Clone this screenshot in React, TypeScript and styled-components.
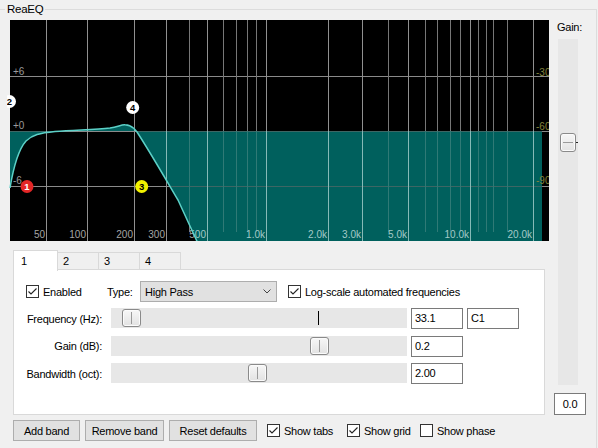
import React from "react";
import styled, { createGlobalStyle } from "styled-components";

const FONT = `"Liberation Sans", Arial, sans-serif`;

const GlobalStyle = createGlobalStyle`
  html, body { margin: 0; padding: 0; background: #f0f0f0; }
  body { font-family: ${FONT}; font-size: 11px; letter-spacing: -0.25px; color: #000; }
  *, *::before, *::after { box-sizing: border-box; }
`;

const Window = styled.div`
  width: 598px;
  height: 448px;
  background: #f0f0f0;
  overflow: hidden;
`;

const Group = styled.fieldset`
  margin: 0;
  width: 597px;
  height: 448px;
  min-width: 0;
  border: 1px solid #dcdcdc;
  border-left: 0;
  border-bottom: 0;
  padding: 1px 0 0 10px;
  display: flex;
`;

const Legend = styled.legend`
  margin-left: -5px;
  padding: 0 2px;
  height: 19px;
  line-height: 19px;
  font-size: 11.5px;
`;

const Main = styled.div`
  width: 539px;
  display: flex;
  flex-direction: column;
`;

const GraphSvg = styled.svg`
  display: block;
  margin-left: -3px;
  overflow: hidden;
  letter-spacing: 0;
`;

const TabArea = styled.div`
  margin: 9px 0 0 3px;
  width: 532px;
  display: flex;
  flex-direction: column;
`;

const TabStrip = styled.div`
  display: flex;
  align-items: flex-end;
  height: 21px;
  margin-bottom: -2px;
`;

const Tab = styled.div<{ $active?: boolean; $w: number; $first?: boolean }>`
  position: relative;
  z-index: ${(p) => (p.$active ? 2 : 0)};
  width: ${(p) => p.$w}px;
  height: ${(p) => (p.$active ? 21 : 19)}px;
  margin-left: ${(p) => (p.$first ? 0 : -1)}px;
  background: ${(p) => (p.$active ? "#ffffff" : "#f0f0f0")};
  border: 1px solid #d9d9d9;
  border-bottom: 0;
  padding: ${(p) => (p.$active ? "3px 0 0 7px" : "1px 0 0 5px")};
  line-height: 15px;
`;

const Panel = styled.div`
  position: relative;
  z-index: 1;
  height: 146px;
  background: #ffffff;
  border: 1px solid #d9d9d9;
  padding: 11px 0 0 12px;
`;

const TopRow = styled.div`
  display: flex;
  align-items: center;
  height: 21px;
`;

const CheckLabel = styled.label<{ $w?: number }>`
  display: flex;
  align-items: center;
  gap: 4px;
  flex: none;
  width: ${(p) => (p.$w ? `${p.$w}px` : "auto")};
  white-space: nowrap;
`;

const Box = styled.span`
  width: 13px;
  height: 13px;
  flex: none;
  border: 1px solid #333333;
  background: #ffffff;
  display: flex;
  align-items: center;
  justify-content: center;
`;

const TypeLabel = styled.span`
  width: 33px;
  flex: none;
`;

const Select = styled.div`
  width: 137px;
  height: 21px;
  flex: none;
  background: #e1e1e1;
  border: 1px solid #adadad;
  display: flex;
  align-items: center;
  justify-content: space-between;
  padding: 0 5px 0 4px;
  margin-right: 11px;
`;

const ParamGrid = styled.div`
  margin-top: 6px;
  display: grid;
  grid-template-columns: 81px 296px 52px 52px;
  grid-auto-rows: 21px;
  column-gap: 4px;
  row-gap: 6.5px;
  align-items: center;
`;

const ParamLabel = styled.div`
  text-align: right;
  padding-right: 5px;
  white-space: nowrap;
`;

const Track = styled.div`
  position: relative;
  height: 20px;
  align-self: start;
  background: #e7e7e7;
`;

const Thumb = styled.div<{ $vertical?: boolean }>`
  position: absolute;
  width: ${(p) => (p.$vertical ? 16 : 19)}px;
  height: ${(p) => (p.$vertical ? 19 : 18)}px;
  border: 1px solid #8a8a8a;
  border-radius: 3px;
  background: linear-gradient(#f7f7f7, #e2e2e2);
  box-shadow: inset 0 0 0 1px #fbfbfb;
  &::after {
    content: "";
    position: absolute;
    background: #9a9a9a;
    ${(p) =>
      p.$vertical
        ? "left: 2px; right: 2px; top: 8px; height: 1px;"
        : "top: 2px; bottom: 2px; left: 8px; width: 1px;"}
  }
`;

const Marker = styled.div`
  position: absolute;
  top: 3px;
  width: 1px;
  height: 14px;
  background: #000;
`;

const Edit = styled.div<{ $center?: boolean }>`
  height: 21px;
  background: #ffffff;
  border: 1px solid #7a7a7a;
  padding-left: ${(p) => (p.$center ? 0 : 3)}px;
  text-align: ${(p) => (p.$center ? "center" : "left")};
  line-height: 19px;
  white-space: nowrap;
`;

const ButtonRow = styled.div`
  display: flex;
  align-items: center;
  gap: 5px;
  margin: 5px 0 0 3px;
  height: 21px;
`;

const Button = styled.div<{ $w: number }>`
  width: ${(p) => p.$w}px;
  height: 21px;
  flex: none;
  background: #e1e1e1;
  border: 1px solid #adadad;
  display: flex;
  align-items: center;
  justify-content: center;
  white-space: nowrap;
`;

const Options = styled.div`
  display: flex;
  align-items: center;
  margin-left: 5px;
`;

const Side = styled.div`
  flex: 1;
  display: flex;
  flex-direction: column;
`;

const GainLabel = styled.div`
  margin-left: 8px;
  line-height: 15px;
`;

const GainTrack = styled.div`
  position: relative;
  margin: 4px 0 0 9px;
  width: 20px;
  height: 346px;
  background: #e7e7e7;
`;

const Tick = styled.div`
  position: absolute;
  left: 18px;
  top: 103px;
  width: 2px;
  height: 1px;
  background: #222;
`;

const GainEdit = styled(Edit)`
  margin: 8px 0 0 5px;
  width: 32px;
  height: 22px;
  line-height: 20px;
`;

/* ---------- graph drawing ---------- */

const MAJOR = [
  { x: 46, label: "50" },
  { x: 87, label: "100" },
  { x: 134, label: "200" },
  { x: 166, label: "300" },
  { x: 207, label: "500" },
  { x: 266, label: "1.0k" },
  { x: 328, label: "2.0k" },
  { x: 362, label: "3.0k" },
  { x: 408, label: "5.0k" },
  { x: 470, label: "10.0k" },
  { x: 533, label: "20.0k" },
];
const MINOR = [189, 223, 236, 247, 256, 388, 425, 437, 450, 460, 478, 486, 493, 507];
const HLINES = [76, 131, 186];

const CURVE =
  "M10,188 C13,170 18,150 26,141 C32,135 40,133 55,131.5 C75,130 95,129.5 110,128 C118,127 121,124.5 125,124.8 C129,125 131,126 134,128.5 L137,132 C150,152 165,178 178,200 L201,250";
const FILL = CURVE + " L542,250 L542,131 L10,131 Z";

const BANDS = [
  { n: "1", x: 27, y: 186.5, bg: "#e32626", fg: "#ffffff" },
  { n: "2", x: 9.5, y: 101.5, bg: "#ffffff", fg: "#000000" },
  { n: "3", x: 141.7, y: 186.5, bg: "#f2f200", fg: "#000000" },
  { n: "4", x: 132.7, y: 107.5, bg: "#ffffff", fg: "#000000" },
];

function Grid({ teal }: { teal?: boolean }) {
  const h = teal ? "#3d6664" : "#8a8a8a";
  const maj = teal ? "#86bab7" : "#909090";
  const min = teal ? "#2f7a76" : "#777777";
  const txt = teal ? "#a3cac8" : "#a5a5a5";
  return (
    <g>
      {HLINES.map((y) => (
        <line key={y} x1={10} x2={549} y1={y + 0.5} y2={y + 0.5} stroke={h} strokeWidth={1} />
      ))}
      {MINOR.map((x) => (
        <line key={x} x1={x + 0.5} x2={x + 0.5} y1={20} y2={232} stroke={min} strokeWidth={1} />
      ))}
      {MAJOR.map((m) => (
        <line key={m.x} x1={m.x + 0.5} x2={m.x + 0.5} y1={20} y2={241} stroke={maj} strokeWidth={1} />
      ))}
      {MAJOR.map((m) => (
        <text
          key={m.label}
          x={m.x - 1}
          y={238}
          textAnchor="end"
          fontFamily='"Liberation Sans", Arial, sans-serif'
          fontSize={10}
          fill={txt}
        >
          {m.label}
        </text>
      ))}
    </g>
  );
}

function Graph() {
  return (
    <GraphSvg width={542} height={221} viewBox="7 20 542 221">
      <defs>
        <clipPath id="fillclip">
          <path d={FILL} />
        </clipPath>
      </defs>
      <rect x={10} y={20} width={539} height={221} fill="#000" />
      <Grid />
      <path d={FILL} fill="#00605d" />
      <g clipPath="url(#fillclip)">
        <Grid teal />
      </g>
      <g fontFamily='"Liberation Sans", Arial, sans-serif' fontSize={10}>
        <text x={13} y={75} fill="#9a9a9a">+6</text>
        <text x={13} y={129} fill="#9a9a9a">+0</text>
        <text x={13} y={184} fill="#9a9a9a">-6</text>
        <text x={536} y={76} fill="#85853c">-30</text>
        <text x={536} y={130} fill="#85853c">-60</text>
        <text x={536} y={184} fill="#85853c">-90</text>
      </g>
      <path d={CURVE} fill="none" stroke="#5cd0c7" strokeWidth={1.5} />
      {BANDS.map((b) => (
        <g key={b.n}>
          <circle cx={b.x} cy={b.y} r={6.5} fill={b.bg} />
          <text
            x={b.x}
            y={b.y + 3.3}
            textAnchor="middle"
            fontFamily='"Liberation Sans", Arial, sans-serif'
            fontSize={9.5}
            fontWeight="bold"
            fill={b.fg}
          >
            {b.n}
          </text>
        </g>
      ))}
    </GraphSvg>
  );
}

function Check({ on }: { on?: boolean }) {
  return (
    <Box>
      {on && (
        <svg width="11" height="11" viewBox="0 0 11 11">
          <polyline points="1.5,5.5 4,8 9.5,2.5" fill="none" stroke="#222" strokeWidth="1.1" />
        </svg>
      )}
    </Box>
  );
}

function Chevron() {
  return (
    <svg width="8" height="5" viewBox="0 0 8 5">
      <polyline points="0.5,0.5 4,4 7.5,0.5" fill="none" stroke="#444" strokeWidth="1" />
    </svg>
  );
}

const PARAMS = [
  { label: "Frequency (Hz):", thumb: 11, value: "33.1", extra: "C1", marker: 207 },
  { label: "Gain (dB):", thumb: 199, value: "0.2" },
  { label: "Bandwidth (oct):", thumb: 137, value: "2.00" },
];

export default function App() {
  return (
    <Window>
      <GlobalStyle />
      <Group>
        <Legend>ReaEQ</Legend>
        <Main>
          <Graph />
          <TabArea>
            <TabStrip>
              <Tab $active $first $w={45}>1</Tab>
              <Tab $w={42}>2</Tab>
              <Tab $w={42}>3</Tab>
              <Tab $w={42}>4</Tab>
            </TabStrip>
            <Panel>
              <TopRow>
                <CheckLabel $w={81}>
                  <Check on />
                  Enabled
                </CheckLabel>
                <TypeLabel>Type:</TypeLabel>
                <Select>
                  <span>High Pass</span>
                  <Chevron />
                </Select>
                <CheckLabel>
                  <Check on />
                  Log-scale automated frequencies
                </CheckLabel>
              </TopRow>
              <ParamGrid>
                {PARAMS.map((p) => (
                  <React.Fragment key={p.label}>
                    <ParamLabel>{p.label}</ParamLabel>
                    <Track>
                      {p.marker !== undefined && <Marker style={{ left: p.marker }} />}
                      <Thumb style={{ left: p.thumb, top: 1 }} />
                    </Track>
                    <Edit>{p.value}</Edit>
                    {p.extra ? <Edit>{p.extra}</Edit> : <span />}
                  </React.Fragment>
                ))}
              </ParamGrid>
            </Panel>
          </TabArea>
          <ButtonRow>
            <Button $w={67}>Add band</Button>
            <Button $w={79}>Remove band</Button>
            <Button $w={88}>Reset defaults</Button>
            <Options>
              <CheckLabel $w={80}>
                <Check on />
                Show tabs
              </CheckLabel>
              <CheckLabel $w={73}>
                <Check on />
                Show grid
              </CheckLabel>
              <CheckLabel>
                <Check />
                Show phase
              </CheckLabel>
            </Options>
          </ButtonRow>
        </Main>
        <Side>
          <GainLabel>Gain:</GainLabel>
          <GainTrack>
            <Thumb $vertical style={{ left: 2, top: 94 }} />
            <Tick />
          </GainTrack>
          <GainEdit $center>0.0</GainEdit>
        </Side>
      </Group>
    </Window>
  );
}
